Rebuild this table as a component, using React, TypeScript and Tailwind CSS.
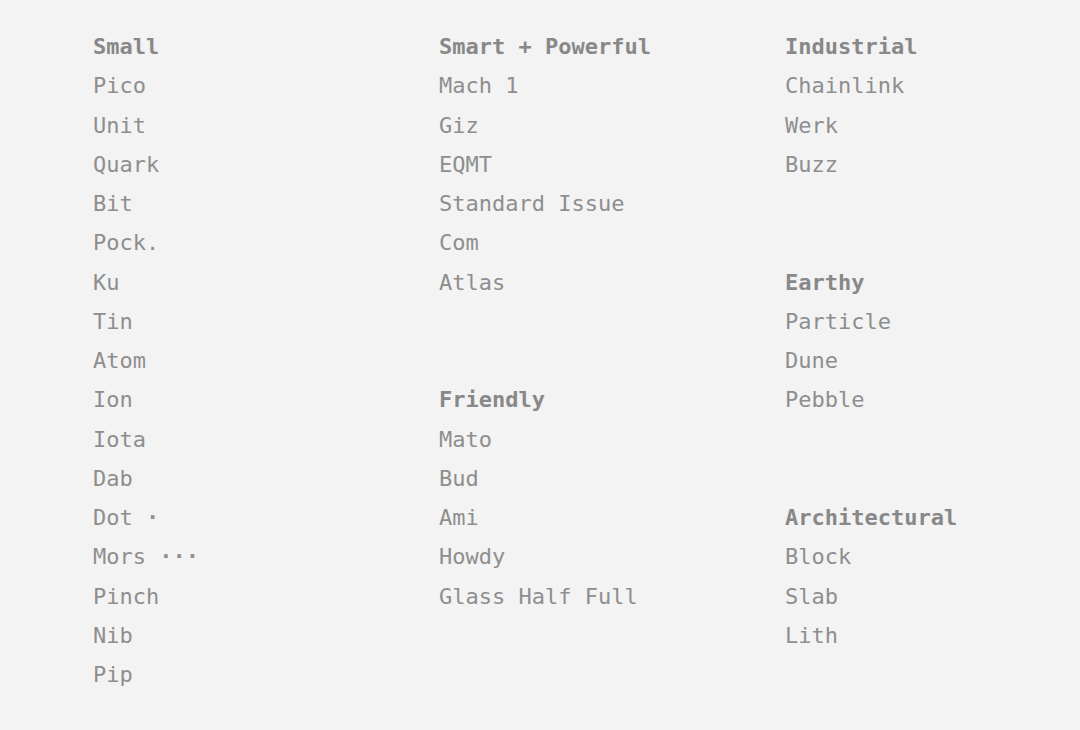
const COLUMNS: (string | null)[][] = [
  [
    "#Small",
    "Pico",
    "Unit",
    "Quark",
    "Bit",
    "Pock.",
    "Ku",
    "Tin",
    "Atom",
    "Ion",
    "Iota",
    "Dab",
    "Dot ·",
    "Mors ···",
    "Pinch",
    "Nib",
    "Pip",
  ],
  [
    "#Smart + Powerful",
    "Mach 1",
    "Giz",
    "EQMT",
    "Standard Issue",
    "Com",
    "Atlas",
    null,
    null,
    "#Friendly",
    "Mato",
    "Bud",
    "Ami",
    "Howdy",
    "Glass Half Full",
  ],
  [
    "#Industrial",
    "Chainlink",
    "Werk",
    "Buzz",
    null,
    null,
    "#Earthy",
    "Particle",
    "Dune",
    "Pebble",
    null,
    null,
    "#Architectural",
    "Block",
    "Slab",
    "Lith",
  ],
];

function Line({ text }: { text: string }) {
  // dots are drawn a touch heavier than the letters
  const m = text.match(/^(.*?)(·+)$/);
  if (!m) return <div className="whitespace-pre">{text}</div>;
  return (
    <div className="whitespace-pre">
      {m[1]}
      <span className="font-bold">{m[2]}</span>
    </div>
  );
}

export default function App() {
  return (
    <div className="min-h-[730px] w-[1080px] bg-[#f3f3f3] pl-[93px] pt-[27px] font-['DejaVu_Sans_Mono',monospace] text-[22px] leading-[39.25px] text-[#8e8e8e]">
      <div className="grid grid-cols-[346px_346px_1fr]">
        {COLUMNS.map((col, i) => (
          <div key={i} className="flex flex-col">
            {col.map((line, j) =>
              line === null ? (
                <div key={j} className="h-[39.25px]" />
              ) : line.startsWith("#") ? (
                <div key={j} className="whitespace-pre font-bold text-[#888]">
                  {line.slice(1)}
                </div>
              ) : (
                <Line key={j} text={line} />
              )
            )}
          </div>
        ))}
      </div>
    </div>
  );
}
